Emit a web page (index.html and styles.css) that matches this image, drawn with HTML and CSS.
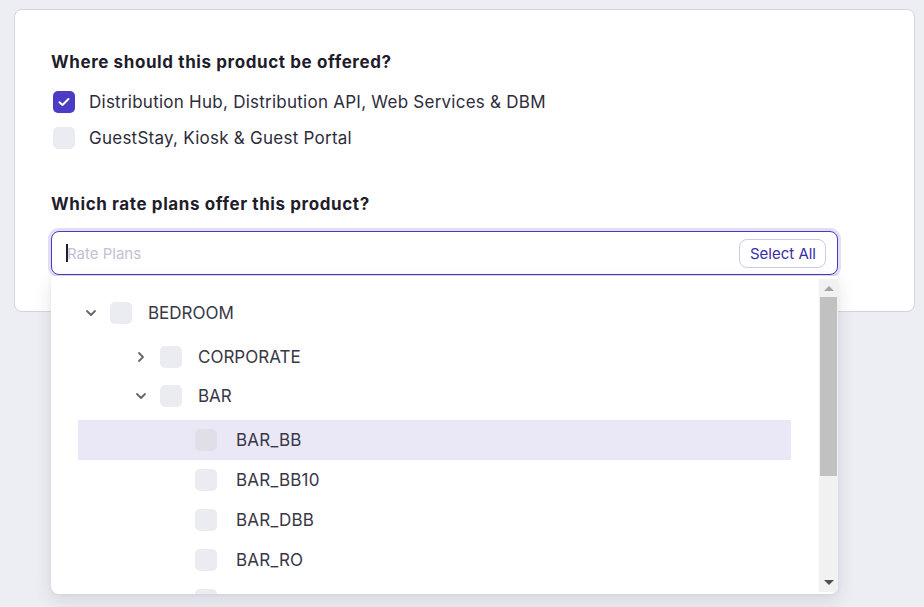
FILE: index.html
```html
<!DOCTYPE html>
<html>
<head>
<meta charset="utf-8">
<link rel="stylesheet" href="styles.css">
</head>
<body>
<div class="page">
  <div class="card">
    <h2 class="q">Where should this product be offered?</h2>
    <div class="opts">
      <label class="opt"><span class="cb checked"><svg viewBox="0 0 22 22" width="22" height="22"><path d="M6.5 11.2l3 2.8 6-6" fill="none" stroke="#fff" stroke-width="2" stroke-linecap="round" stroke-linejoin="round"/></svg></span><span>Distribution Hub, Distribution API, Web Services &amp; DBM</span></label>
      <label class="opt"><span class="cb"></span><span>GuestStay, Kiosk &amp; Guest Portal</span></label>
    </div>
    <h2 class="q q2">Which rate plans offer this product?</h2>
    <div class="field">
      <div class="input">
        <span class="caret"></span><span class="ph">Rate Plans</span>
        <button class="selall">Select All</button>
      </div>
      <div class="dropdown">
        <div class="list">
          <div class="row lvl0">
            <span class="chev"><svg viewBox="0 0 12 12" width="12" height="12"><path d="M2 4l4 4 4-4" fill="none" stroke="#666" stroke-width="1.8" stroke-linecap="round" stroke-linejoin="round"/></svg></span>
            <span class="cb"></span><span class="lbl">BEDROOM</span>
          </div>
          <div class="children">
            <div class="row lvl1">
              <span class="chev"><svg viewBox="0 0 12 12" width="12" height="12"><path d="M4 2l4 4-4 4" fill="none" stroke="#666" stroke-width="1.8" stroke-linecap="round" stroke-linejoin="round"/></svg></span>
              <span class="cb"></span><span class="lbl">CORPORATE</span>
            </div>
            <div class="row lvl1">
              <span class="chev"><svg viewBox="0 0 12 12" width="12" height="12"><path d="M2 4l4 4 4-4" fill="none" stroke="#666" stroke-width="1.8" stroke-linecap="round" stroke-linejoin="round"/></svg></span>
              <span class="cb"></span><span class="lbl">BAR</span>
            </div>
            <div class="children">
              <div class="row leaf hl"><span class="cb"></span><span class="lbl">BAR_BB</span></div>
              <div class="row leaf"><span class="cb"></span><span class="lbl">BAR_BB10</span></div>
              <div class="row leaf"><span class="cb"></span><span class="lbl">BAR_DBB</span></div>
              <div class="row leaf"><span class="cb"></span><span class="lbl">BAR_RO</span></div>
              <div class="row leaf"><span class="cb"></span></div>
            </div>
          </div>
        </div>
        <div class="sbar">
          <span class="arr up"></span>
          <span class="thumb"></span>
          <span class="sp"></span>
          <span class="arr down"></span>
        </div>
      </div>
    </div>
  </div>
</div>
</body>
</html>
```
FILE: styles.css
```css
html, body {
  margin: 0;
  padding: 0;
  height: 100%;
  overflow: hidden;
}
body {
  background: #eceef3;
  font-family: Inter, "Noto Sans", sans-serif;
  color: #2b2a38;
}
.page {
  padding: 9px 8px 0 14px;
}
.card {
  background: #fff;
  border: 1px solid #d5d4de;
  border-radius: 8px;
  padding: 40px 0 0 36px;
  box-sizing: border-box;
  height: 303px;
  width: 901px;
}
.q {
  margin: 0;
  font-size: 17px;
  line-height: 24px;
  font-weight: 700;
  letter-spacing: 0.6px;
  color: #1f1d2c;
}
.q2 {
  margin-top: 43px;
}
.opts {
  display: flex;
  flex-direction: column;
  gap: 14px;
  margin-top: 17px;
}
.opt {
  display: flex;
  align-items: center;
  gap: 14px;
  font-size: 17px;
  letter-spacing: 0.25px;
  line-height: 22px;
  color: #2d2c3b;
  padding-left: 2px;
}
.cb {
  width: 22px;
  height: 22px;
  border-radius: 5px;
  background: #eaecf1;
  flex: none;
  display: block;
}
.cb svg { display: block; }
.cb.checked {
  background: #4c3bc4;
}
.field {
  position: relative;
  margin-top: 15px;
  width: 787px;
}
.input {
  height: 44px;
  box-sizing: border-box;
  border: 1.5px solid #4a3bb9;
  border-radius: 8px;
  box-shadow: 0 0 0 3px rgba(90, 72, 200, 0.18);
  display: flex;
  align-items: center;
  padding: 0 12px 0 14px;
  background: #fff;
}
.caret {
  width: 2px;
  height: 18px;
  background: #1f1d2c;
  margin-right: -1px;
}
.ph {
  font-size: 15px;
  color: #c3c1d3;
  flex: 1;
}
.selall {
  font-family: inherit;
  font-size: 15px;
  color: #3a2da6;
  background: #fff;
  border: 1px solid #cfcbe9;
  border-radius: 8px;
  height: 29px;
  padding: 0 9px 0 10px;
  margin-right: -1px;
}
.dropdown {
  position: absolute;
  top: 45px;
  left: 0;
  width: 787px;
  height: 318px;
  background: #fff;
  border-radius: 0 0 8px 8px;
  box-shadow: 0 6px 18px rgba(40, 45, 70, 0.12), 0 0 4px rgba(40, 45, 70, 0.06);
  display: flex;
  overflow: hidden;
}
.list {
  flex: 1;
  padding: 17px 28px 0 27px;
}
.row {
  height: 40px;
  display: flex;
  align-items: center;
  font-size: 17px;
  color: #383746;
}
.chev {
  width: 26px;
  display: flex;
  justify-content: center;
  margin-right: 6px;
}
.chev svg { display: block; }
.lbl { margin-left: 16px; }
.lvl1 { padding-left: 50px; }
.lvl1 + .lvl1 { margin-top: -1px; }
.leaf { padding-left: 117px; }
.leaf .lbl { margin-left: 19px; letter-spacing: 0.2px; }
.children { margin-top: 4px; }
.hl { background: #eae8f6; }
.hl .cb { background: #e0dfe8; }
.sbar {
  width: 19px;
  background: #f1f1f1;
  display: flex;
  flex-direction: column;
  align-items: center;
  margin: 3px 0 2px;
}
.arr {
  width: 0;
  height: 0;
  border-left: 5px solid transparent;
  border-right: 5px solid transparent;
  margin: 7px 0;
}
.arr.up { border-bottom: 5px solid #a3a3a3; }
.arr.down { border-top: 5px solid #505050; }
.thumb {
  width: 17px;
  height: 179px;
  background: #c1c1c1;
  margin-top: -1px;
}
.sp { flex: 1; }
```
